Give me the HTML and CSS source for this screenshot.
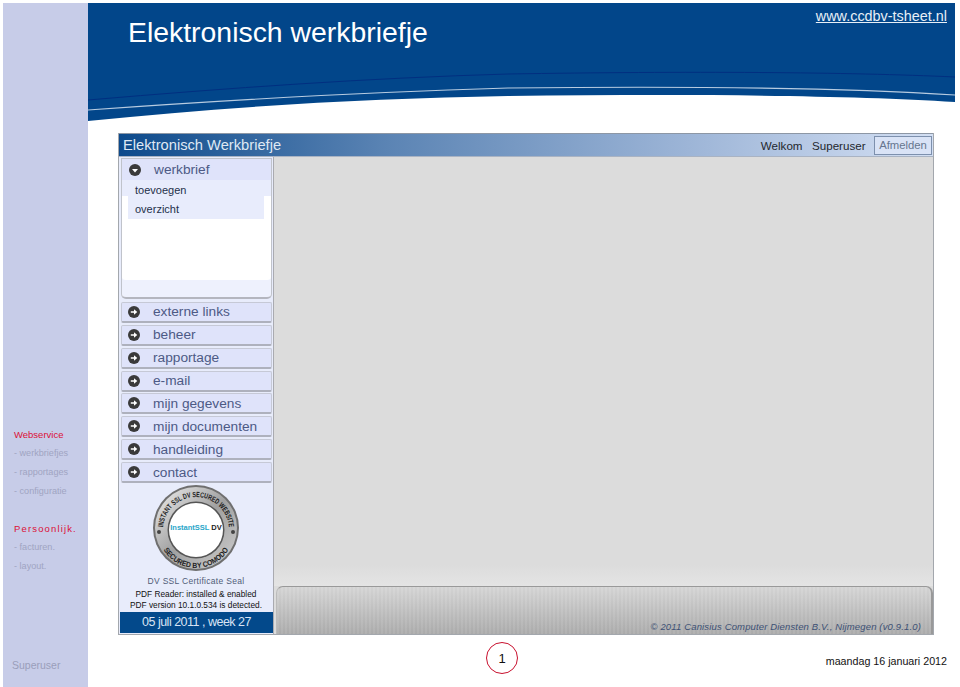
FILE: index.html
```html
<!DOCTYPE html>
<html lang="nl">
<head>
<meta charset="utf-8">
<title>Elektronisch werkbriefje</title>
<link rel="stylesheet" href="styles.css">
</head>
<body>
<div class="slide">
  <aside class="side">
    <div class="side-nav">
      <div class="side-head">Webservice</div>
      <div class="side-link">- werkbriefjes</div>
      <div class="side-link">- rapportages</div>
      <div class="side-link">- configuratie</div>
      <div class="side-head wide">Persoonlijk.</div>
      <div class="side-link">- facturen.</div>
      <div class="side-link">- layout.</div>
    </div>
    <div class="side-user">Superuser</div>
  </aside>
  <main class="main">
    <header class="banner">
      <svg class="banner-art" viewBox="0 0 867 118" width="867" height="118" aria-hidden="true">
        <path d="M0 118 C140 104 280 95 420 93 C600 91 760 92 867 99 V0 H0 Z" fill="#02468a"/>
        <path d="M0 97 C140 85 280 75 420 71 C600 68 760 69 867 74" fill="none" stroke="#012f80" stroke-width="1"/>
        <path d="M0 107 C140 97 280 89 420 85 C600 83 760 85 867 92" fill="none" stroke="#b7cbe0" stroke-width="1.200"/>
      </svg>
      <h1 class="banner-title">Elektronisch werkbriefje</h1>
      <a class="banner-link">www.ccdbv-tsheet.nl</a>
    </header>
    <section class="app">
      <div class="app-bar">
        <div class="app-name">Elektronisch Werkbriefje</div>
        <div class="app-user">
          <span>Welkom</span><span>Superuser</span><span class="logout">Afmelden</span>
        </div>
      </div>
      <div class="app-body">
        <nav class="menu">
          <div class="panel">
            <div class="menu-item open">
              <svg class="bullet" viewBox="0 0 12 12"><circle cx="6" cy="6" r="6" fill="#3a3a3a"/><path d="M3 5h6L6 8.500Z" fill="#fff"/></svg>
              <span>werkbrief</span>
            </div>
            <div class="sub">toevoegen</div>
            <div class="sub current">overzicht</div>
          </div>
          <div class="menu-list">
            <div class="menu-item"><svg class="bullet" viewBox="0 0 12 12"><circle cx="6" cy="6" r="6" fill="#3a3a3a"/><path d="M2.800 5.200H6V3.200L9.300 6 6 8.800V6.800H2.800Z" fill="#fff"/></svg><span>externe links</span></div>
            <div class="menu-item"><svg class="bullet" viewBox="0 0 12 12"><circle cx="6" cy="6" r="6" fill="#3a3a3a"/><path d="M2.800 5.200H6V3.200L9.300 6 6 8.800V6.800H2.800Z" fill="#fff"/></svg><span>beheer</span></div>
            <div class="menu-item"><svg class="bullet" viewBox="0 0 12 12"><circle cx="6" cy="6" r="6" fill="#3a3a3a"/><path d="M2.800 5.200H6V3.200L9.300 6 6 8.800V6.800H2.800Z" fill="#fff"/></svg><span>rapportage</span></div>
            <div class="menu-item"><svg class="bullet" viewBox="0 0 12 12"><circle cx="6" cy="6" r="6" fill="#3a3a3a"/><path d="M2.800 5.200H6V3.200L9.300 6 6 8.800V6.800H2.800Z" fill="#fff"/></svg><span>e-mail</span></div>
            <div class="menu-item"><svg class="bullet" viewBox="0 0 12 12"><circle cx="6" cy="6" r="6" fill="#3a3a3a"/><path d="M2.800 5.200H6V3.200L9.300 6 6 8.800V6.800H2.800Z" fill="#fff"/></svg><span>mijn gegevens</span></div>
            <div class="menu-item"><svg class="bullet" viewBox="0 0 12 12"><circle cx="6" cy="6" r="6" fill="#3a3a3a"/><path d="M2.800 5.200H6V3.200L9.300 6 6 8.800V6.800H2.800Z" fill="#fff"/></svg><span>mijn documenten</span></div>
            <div class="menu-item"><svg class="bullet" viewBox="0 0 12 12"><circle cx="6" cy="6" r="6" fill="#3a3a3a"/><path d="M2.800 5.200H6V3.200L9.300 6 6 8.800V6.800H2.800Z" fill="#fff"/></svg><span>handleiding</span></div>
            <div class="menu-item"><svg class="bullet" viewBox="0 0 12 12"><circle cx="6" cy="6" r="6" fill="#3a3a3a"/><path d="M2.800 5.200H6V3.200L9.300 6 6 8.800V6.800H2.800Z" fill="#fff"/></svg><span>contact</span></div>
          </div>
          <svg class="seal" viewBox="0 0 88 88" width="88" height="88" role="img" aria-label="Instant SSL DV seal">
            <defs>
              <linearGradient id="ring" x1="0" y1="0" x2="1" y2="1">
                <stop offset="0" stop-color="#f0f0f0"/><stop offset="0.5" stop-color="#a0a0a0"/><stop offset="1" stop-color="#d0d0d0"/>
              </linearGradient>
              <path id="arcTop" d="M11 46A33 33 0 0 1 77 46"/>
              <path id="arcBottom" d="M6 46A38 38 0 0 0 82 46"/>
            </defs>
            <circle cx="44" cy="44" r="43" fill="#6f6f6f"/>
            <circle cx="44" cy="44" r="41" fill="url(#ring)"/>
            <circle cx="44" cy="46" r="28.500" fill="#555"/>
            <circle cx="44" cy="46" r="27" fill="#fff"/>
            <circle cx="7" cy="48" r="2" fill="#444"/>
            <circle cx="81" cy="48" r="2" fill="#444"/>
            <text class="seal-arc"><textPath href="#arcTop" startOffset="50%" text-anchor="middle" textLength="98" lengthAdjust="spacingAndGlyphs">INSTANT SSL DV SECURED WEBSITE</textPath></text>
            <text class="seal-arc"><textPath href="#arcBottom" startOffset="50%" text-anchor="middle" textLength="78" lengthAdjust="spacingAndGlyphs">SECURED BY COMODO</textPath></text>
            <text x="44" y="46" text-anchor="middle" class="seal-mid"><tspan fill="#2aa6c9">InstantSSL</tspan><tspan fill="#222"> DV</tspan></text>
          </svg>
          <div class="seal-cap">DV SSL Certificate Seal</div>
          <div class="pdf">PDF Reader: installed &amp; enabled</div>
          <div class="pdf">PDF version 10.1.0.534 is detected.</div>
          <div class="date-bar">05 juli 2011 , week 27</div>
        </nav>
        <div class="content">
          <div class="canvas"></div>
          <div class="copy">© 2011 Canisius Computer Diensten B.V., Nijmegen (v0.9.1.0)</div>
        </div>
      </div>
    </section>
    <footer class="foot">
      <div class="page-num">1</div>
      <div class="foot-date">maandag 16 januari 2012</div>
    </footer>
  </main>
</div>
</body>
</html>
```

FILE: styles.css
```css
* { box-sizing: border-box; }
html, body { margin: 0; height: 100%; background: #fff; overflow: hidden; }
body { font-family: "Liberation Sans", Arial, sans-serif; }

.slide { display: flex; width: 960px; height: 687px; padding: 3px 5px 0 3px; }

.side { width: 85px; flex: none; background: #c7cce8; display: flex; flex-direction: column; padding: 423.500px 0 0 11px; }
.side-nav { flex: 1; }
.side-head { font-size: 9.500px; color: #dc1037; height: 15px; line-height: 15px; margin-bottom: 4.200px; }
.side-head.wide { letter-spacing: 1.150px; margin-top: 22px; }
.side-link { font-size: 9.100px; color: #a0a4c2; height: 15px; line-height: 15px; margin-bottom: 4.200px; }
.side-user { font-size: 10.500px; color: #9a9eba; height: 28px; margin-left: -2px; }

.main { flex: 1; display: flex; flex-direction: column; min-width: 0; }

.banner { position: relative; height: 118px; flex: none; display: flex; justify-content: space-between; align-items: flex-start; padding: 0 8px 0 40px; }
.banner-art { position: absolute; left: 0; top: 0; }
.banner-title { position: relative; margin: 12px 0 0; font-weight: normal; font-size: 28.400px; line-height: 34px; color: #fff; }
.banner-link { position: relative; margin-top: 5px; font-size: 14.400px; line-height: 17px; color: #e8eff7; text-decoration: underline; }

.app { margin: 12px 21px 0 30px; height: 502px; flex: none; border: 1px solid #a3a7ad; border-top: 0; display: flex; flex-direction: column; }
.app-bar { height: 24px; flex: none; display: flex; justify-content: space-between; align-items: center; background: linear-gradient(90deg, #0d4a8b 0%, #5b84b4 33%, #9db5d7 70%, #d3dff3 100%); border-top: 1px solid #8d97a5; border-bottom: 1px solid #a9b3c3; padding: 0 1px 0 4px; }
.app-name { font-size: 14.700px; color: #dfe8f4; }
.app-user { display: flex; align-items: center; font-size: 11.600px; color: #24272e; }
.app-user span { margin-right: 9.500px; }
.app-user .logout { margin: 0 0 0 -1px; height: 19px; width: 58px; line-height: 17px; text-align: center; font-size: 11.300px; color: #66768f; border: 1px solid #7d90ad; background: #d9e3f6; }

.app-body { flex: 1; display: flex; min-height: 0; }

.menu { width: 155px; flex: none; background: #e8ecfb; display: flex; flex-direction: column; align-items: stretch; border-right: 1px solid #a9aab0; }
.panel { height: 142px; margin: 1px 1px 0 2px; background: #fff; border: 1px solid #c0c3cb; border-bottom: 2px solid #b4b6bf; border-radius: 0 0 5px 5px; box-shadow: inset 0 -17px 0 #eef1fd; }
.menu-item { height: 21px; display: flex; align-items: center; gap: 13px; padding-left: 7px; font-size: 13.700px; color: #4d5a85; background: #dfe3fa; }
.panel .sub { height: 16px; padding-top: 4px; line-height: 13px; padding-left: 13px; font-size: 11px; color: #24304a; background: #e8ecfc; }
.panel .sub.current { height: 23px; margin: 0 7px 0 6px; padding-top: 7px; padding-left: 7px; }
.bullet { width: 12px; height: 12px; flex: none; }

.menu-list { display: flex; flex-direction: column; gap: 1.860px; margin: 3px 1px 0 2px; }
.menu-list .menu-item { border: 1px solid #c6c9d6; border-bottom: 2px solid #aeb1bd; border-radius: 2px; padding-left: 6px; height: 21px; }

.seal { align-self: center; margin-top: 1px; flex: none; }
.seal-arc { font-family: "Liberation Sans", sans-serif; font-size: 7.500px; font-weight: bold; fill: #1c1c1c; }
.seal-mid { font-family: "Liberation Sans", sans-serif; font-size: 7.500px; font-weight: bold; }
.seal-cap { margin-top: 4px; text-align: center; font-size: 8.500px; letter-spacing: 0.300px; color: #505d78; line-height: 11px; }
.pdf { text-align: center; font-size: 8.300px; color: #111; line-height: 11px; }
.seal-cap + .pdf { margin-top: 2px; }
.date-bar { margin: 1px 0 1px 1px; height: 21px; line-height: 21px; text-align: center; background: #03498b; color: #d8e4f4; font-size: 12.500px; letter-spacing: -0.500px; }

.content { flex: 1; min-width: 0; display: flex; flex-direction: column; background: #dcdcdc; }
.canvas { flex: 1; background: linear-gradient(180deg, #dcdcdc 95%, #e4e4e4 100%); }
.copy { height: 48px; margin-left: 2px; padding: 34px 10px 0 0; text-align: right; font-size: 9.500px; font-style: italic; letter-spacing: 0.150px; color: #3d5175; background: repeating-linear-gradient(90deg, rgba(255,255,255,.05) 0 2px, rgba(0,0,0,.015) 2px 4px), linear-gradient(180deg, #d6d6d6 0%, #adadad 100%); border-top: 1px solid #999; border-left: 1px solid #bbb; border-right: 2px solid #999; border-radius: 7px 7px 0 0; }

.foot { flex: 1; display: flex; align-items: flex-start; padding-left: 398px; }
.page-num { width: 32px; height: 32px; margin-top: 7px; border: 1.500px solid #c8102e; border-radius: 50%; display: flex; align-items: center; justify-content: center; font-size: 13px; color: #111; }
.foot-date { margin: 19px 0 0 auto; padding-right: 8px; font-size: 10.700px; line-height: 14px; color: #111; }
```
